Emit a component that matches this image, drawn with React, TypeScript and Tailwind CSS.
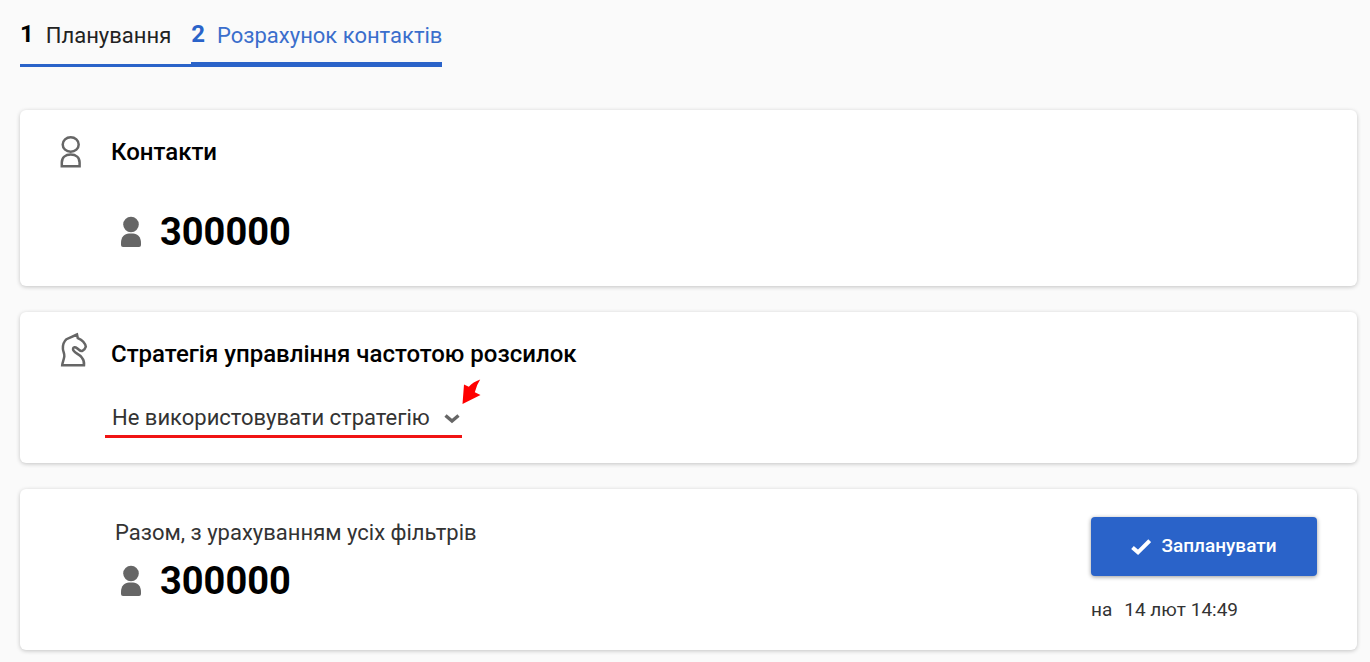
import { useState } from 'react';
import type { ReactNode } from 'react';
import { clsx } from 'clsx';

const steps = [
  { id: 1, label: 'Планування' },
  { id: 2, label: 'Розрахунок контактів' },
];

const strategies = ['Не використовувати стратегію'];

const ContactOutlineIcon = () => (
  <svg className="w-7 h-9" viewBox="0 0 28 36" fill="none" stroke="#666" strokeWidth="2.5" aria-hidden="true">
    <ellipse cx="10.7" cy="10.5" rx="8" ry="7.3" />
    <path d="M1.8 32.3V28.5C1.8 23.5 5.5 20.6 10.7 20.6S19.6 23.5 19.6 28.5V32.3Z" />
  </svg>
);

const KnightIcon = () => (
  <svg className="w-7 h-9" viewBox="0 0 28 36" fill="none" stroke="#666" strokeWidth="2.5" aria-hidden="true">
    <path d="M17 2.5 L6.5 7.2 C4 9.5 2.6 13 2.9 17 C3.2 20 4.6 21.5 4.3 24.5 C4 27.5 2.4 30 2.2 33.3 H24 C24.4 30 23.6 27.5 21.6 25.2 C18.5 21.5 13 20.5 13 17 C13 14.8 15.2 14.6 17 16.2 C18.6 17.7 20.6 19.6 22.4 18.8 C24 18 25.4 16.4 25.8 14.8 C25.2 11.5 22 8 17.8 6.2 Z" />
  </svg>
);

const PersonIcon = () => (
  <svg className="w-5 h-8" viewBox="0 0 20 32" fill="#666" aria-hidden="true">
    <circle cx="10" cy="8.5" r="7.8" />
    <path d="M0 27C0 21 3.5 17.6 8 17.6H12C16.5 17.6 20 21 20 27V29Q20 31 18 31H2Q0 31 0 29Z" />
  </svg>
);

const CheckIcon = () => (
  <svg className="w-5 h-5" viewBox="0 0 20 20" fill="none" stroke="#fff" strokeWidth="4" aria-hidden="true">
    <path d="M1.5 10.5 L7 15.3 L18.7 3.6" />
  </svg>
);

const PointerArrow = () => (
  <svg className="absolute left-full -top-[22px] w-5 h-7" viewBox="0 0 20 28" fill="#f00" aria-hidden="true">
    <path d="M0.5 26 L2 6.5 L6.8 8.8 Q11 4 18.2 1.5 Q14.5 7 12.8 14.2 L18.5 17 Z" />
  </svg>
);

const Card = ({ className, children }: { className?: string; children: ReactNode }) => (
  <section className={clsx('rounded-md bg-white shadow-[0_1px_4px_rgba(0,0,0,0.22)]', className)}>
    {children}
  </section>
);

const CardTitle = ({ icon, className, children }: { icon: ReactNode; className: string; children: ReactNode }) => (
  <div className={clsx('flex gap-[23px]', className)}>
    {icon}
    <h2 className="text-[24px] leading-7 font-medium text-black">{children}</h2>
  </div>
);

const ContactCount = ({ value }: { value: number }) => (
  <div className="flex items-center gap-[19px]">
    <PersonIcon />
    <span className="text-[38px] leading-10 font-bold text-black">{value}</span>
  </div>
);

const App = () => {
  const [step, setStep] = useState(2);
  const [strategy, setStrategy] = useState(strategies[0]);

  return (
    <main className="min-h-screen bg-[#fafafa] pt-4 pb-3 pl-5 pr-[13px] font-[Roboto,sans-serif] text-[#333]">
      {/* Steps */}
      <nav className="flex items-stretch">
        {steps.map((item) => (
          <button
            key={item.id}
            onClick={() => setStep(item.id)}
            className={clsx(
              'flex h-[51px] items-start gap-3 border-[#2a63c9] text-[22px] leading-9',
              item.id === step ? 'border-b-[5px] text-[#3a6ecc]' : 'border-b-3 pr-5 text-[#222]'
            )}
          >
            <span className={clsx('text-[24px] leading-9 font-bold', item.id === step ? 'text-[#2a63c9]' : 'text-black')}>
              {item.id}
            </span>
            <span className="leading-10">{item.label}</span>
          </button>
        ))}
      </nav>

      <div className="mt-[43px] flex flex-col gap-[26px]">
        <Card className="px-10 pt-6 pb-[34px]">
          <CardTitle className="items-center" icon={<ContactOutlineIcon />}>
            Контакти
          </CardTitle>
          <div className="mt-[42px] pl-[61px]">
            <ContactCount value={300000} />
          </div>
        </Card>

        <Card className="px-10 pt-5 pb-[25px]">
          <CardTitle className="items-end" icon={<KnightIcon />}>
            Стратегія управління частотою розсилок
          </CardTitle>
          <div className="mt-8 flex pl-[45px]">
            <div className="relative flex items-center border-b-3 border-[#f01414]">
              <select
                aria-label="Стратегія"
                value={strategy}
                onChange={(e) => setStrategy(e.target.value)}
                className="h-[35px] appearance-none bg-transparent pl-[7px] pr-8 text-[22px] text-[#333] outline-none"
              >
                {strategies.map((item) => (
                  <option key={item}>{item}</option>
                ))}
              </select>
              <svg
                className="pointer-events-none absolute right-0.5 w-4 h-4"
                viewBox="0 0 16 16"
                fill="none"
                stroke="#666"
                strokeWidth="3.4"
                aria-hidden="true"
              >
                <path d="M1.5 5.5 L8 11 L14.5 5.5" />
              </svg>
              <PointerArrow />
            </div>
          </div>
        </Card>

        <Card className="flex items-start justify-between pt-7 pr-10 pb-[26px] pl-[95px]">
          <div>
            <p className="text-[22px] leading-8">Разом, з урахуванням усіх фільтрів</p>
            <div className="mt-3 pl-1.5">
              <ContactCount value={300000} />
            </div>
          </div>
          <div>
            <button className="flex h-[59px] w-[226px] items-center justify-center gap-2.5 rounded-sm bg-[#2a63c9] text-[19px] font-medium text-white shadow-[0_1px_4px_rgba(0,0,0,0.4)]">
              <CheckIcon />
              Запланувати
            </button>
            <p className="mt-5 flex gap-3 text-[19px] leading-7">
              <span>на</span>
              <span>14 лют 14:49</span>
            </p>
          </div>
        </Card>
      </div>
    </main>
  );
};

export default App;
